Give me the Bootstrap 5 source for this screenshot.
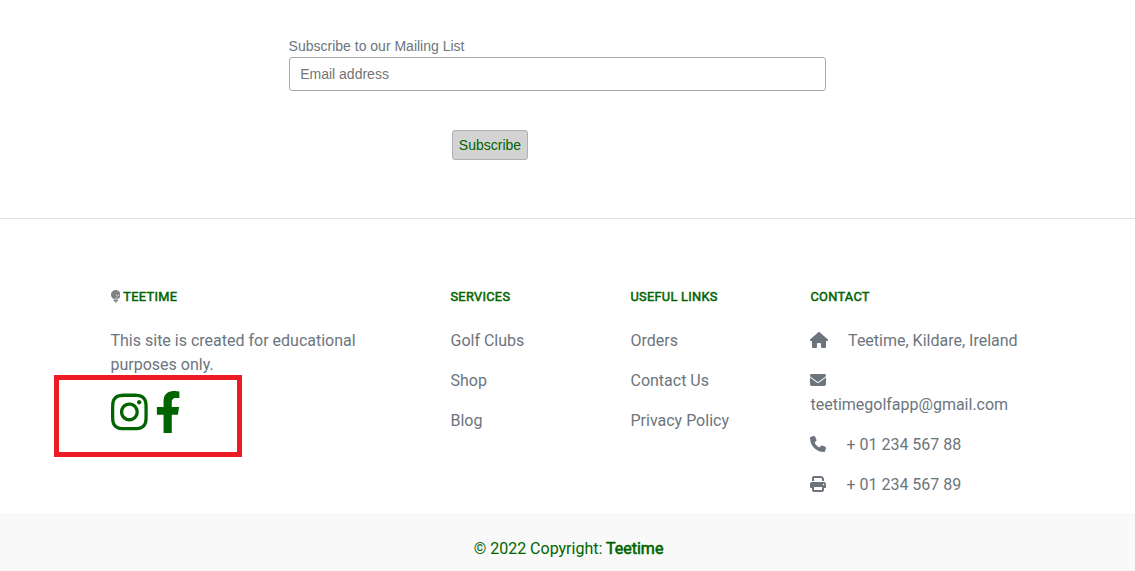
<!DOCTYPE html>
<html lang="en">
<head>
<meta charset="utf-8">
<meta name="viewport" content="width=device-width, initial-scale=1">
<title>Teetime</title>
<link href="https://cdn.jsdelivr.net/npm/bootstrap@5.3.0/dist/css/bootstrap.min.css" rel="stylesheet">
<style>
body{font-family:Roboto,sans-serif;color:#6c757d;overflow:hidden}
.mailing{font-family:"Liberation Sans",Arial,sans-serif;font-size:14px;width:537.4px;margin-left:288.6px;padding-top:36px;height:218px}
.mailing label{line-height:21px;display:block}
.mailing .form-control{height:34px;font-size:14px;padding:0 10.6px;border:1px solid #aaa;border-radius:3px}
.mailing .form-control::placeholder{color:#757575}
.btn-subscribe{--bs-btn-color:#006400;--bs-btn-bg:#d3d3d3;--bs-btn-border-color:#abb0b2;--bs-btn-hover-color:#006400;--bs-btn-hover-bg:#c4c4c4;font-size:14px;line-height:20px;width:76px;height:30px;padding:4px 0;border-radius:3px;margin:39px 0 0 163.4px}
.site-footer{border-top:1px solid #dee2e6}
.foot-links{padding:70.3px 11px 0 13px}
.foot-links h6{font-size:12.8px;line-height:15.4px;font-weight:400;letter-spacing:.29px;color:#006400;-webkit-text-stroke:.5px #006400;margin-bottom:24px;white-space:nowrap}
.foot-links p{margin-bottom:16px;line-height:24px}
.foot-links a{color:inherit;text-decoration:none}
svg{fill:currentColor}
.contact-icon{height:16px;vertical-align:-2px}
.tee{height:12.8px;width:9.6px;color:gray;vertical-align:-1.6px}
.social{color:#006400;height:42px;gap:8px;margin-top:14px}
.social svg{height:42px;display:block;overflow:visible}
.callout{left:-44.5px;top:85.7px;width:188px;height:82px;border:5px solid #ed1c24;pointer-events:none}
.copyright{background:#f9f9f9;color:#006400;height:60px;padding:24.5px 0 0 2px}
.brand{-webkit-text-stroke:.6px #006400;color:#006400;text-decoration:none}
</style>
</head>
<body>
<form class="mailing">
  <label for="email">Subscribe to our Mailing List</label>
  <input id="email" type="email" class="form-control" placeholder="Email address">
  <button type="button" class="btn btn-subscribe">Subscribe</button>
</form>
<footer class="site-footer">
  <div class="container foot-links">
    <div class="row">
      <div class="col-lg-4 mx-auto position-relative">
        <h6><svg class="tee" viewBox="0 0 384 512"><path d="M384 192c0 66.800-34.100 125.600-85.800 160H85.800C34.100 317.600 0 258.800 0 192C0 86 86 0 192 0S384 86 384 192zM242.100 256.600c0 18.500-15 33.500-33.500 33.500c-4.900 0-9.100 5.100-5.400 8.400c5.900 5.200 13.700 8.400 22.100 8.400c18.500 0 33.500-15 33.500-33.500c0-8.500-3.200-16.200-8.400-22.100c-3.300-3.700-8.400 .5-8.400 5.400zm-52.300-49.300c-4.900 0-9.100 5.100-5.400 8.400c5.900 5.200 13.700 8.400 22.100 8.400c18.500 0 33.500-15 33.500-33.500c0-8.500-3.200-16.200-8.400-22.100c-3.300-3.700-8.400 .5-8.400 5.400c0 18.500-15 33.500-33.500 33.500zm113.500-17.500c0 18.500-15 33.500-33.500 33.500c-4.900 0-9.100 5.100-5.400 8.400c5.900 5.200 13.700 8.400 22.100 8.400c18.500 0 33.500-15 33.500-33.500c0-8.500-3.200-16.200-8.400-22.100c-3.300-3.700-8.400 .5-8.400 5.400zM96 416c0-17.700 14.300-32 32-32h128c17.700 0 32 14.300 32 32s-14.300 32-32 32H240c-8.800 0-16 7.200-16 16v16c0 17.700-14.300 32-32 32s-32-14.300-32-32V464c0-8.800-7.200-16-16-16H128c-17.700 0-32-14.300-32-32z"/></svg> TEETIME</h6>
        <p class="mb-0">This site is created for educational purposes only.</p>
        <div class="social d-flex">
          <svg width="36.75" viewBox="0 0 448 512" aria-label="Instagram"><path d="M224.100 141c-63.600 0-114.900 51.300-114.900 114.900s51.300 114.900 114.900 114.900S339 319.500 339 255.900 287.700 141 224.100 141zm0 189.600c-41.100 0-74.700-33.500-74.700-74.700s33.500-74.700 74.700-74.700 74.700 33.500 74.700 74.700-33.600 74.700-74.700 74.700zm146.400-194.300c0 14.900-12 26.800-26.800 26.800-14.900 0-26.800-12-26.800-26.800s12-26.800 26.800-26.800 26.800 12 26.800 26.800zm76.100 27.200c-1.700-35.900-9.900-67.700-36.200-93.900-26.200-26.200-58-34.400-93.900-36.200-37-2.100-147.900-2.100-184.900 0-35.800 1.700-67.600 9.900-93.900 36.100s-34.400 58-36.200 93.900c-2.100 37-2.100 147.900 0 184.900 1.700 35.900 9.900 67.700 36.200 93.900s58 34.400 93.900 36.200c37 2.100 147.900 2.100 184.900 0 35.900-1.700 67.700-9.900 93.900-36.200 26.200-26.200 34.400-58 36.200-93.900 2.100-37 2.100-147.800 0-184.800zM398.800 388c-7.800 19.600-22.900 34.700-42.600 42.600-29.500 11.700-99.500 9-132.100 9s-102.700 2.600-132.100-9c-19.600-7.800-34.700-22.900-42.600-42.600-11.700-29.500-9-99.500-9-132.100s-2.600-102.700 9-132.100c7.800-19.600 22.900-34.700 42.600-42.600 29.500-11.700 99.500-9 132.100-9s102.700-2.600 132.100 9c19.600 7.800 34.700 22.900 42.600 42.600 11.700 29.500 9 99.500 9 132.100s2.700 102.700-9 132.100z"/></svg>
          <svg width="26.25" viewBox="0 0 320 512" aria-label="Facebook"><path d="M279.140 288l14.220-92.660h-88.910v-60.130c0-25.350 12.420-50.060 52.240-50.060h40.420V6.260S260.430 0 225.360 0c-73.220 0-121.080 44.380-121.080 124.720v70.620H22.890V288h81.390v224h100.170V288z"/></svg>
        </div>
        <div class="callout position-absolute"></div>
      </div>
      <div class="col-lg-2 mx-auto">
        <h6>SERVICES</h6>
        <p><a href="#">Golf Clubs</a></p>
        <p><a href="#">Shop</a></p>
        <p><a href="#">Blog</a></p>
      </div>
      <div class="col-lg-2 mx-auto">
        <h6>USEFUL LINKS</h6>
        <p><a href="#">Orders</a></p>
        <p><a href="#">Contact Us</a></p>
        <p><a href="#">Privacy Policy</a></p>
      </div>
      <div class="col-lg-3 mx-auto">
        <h6>CONTACT</h6>
        <p><svg class="contact-icon me-3" width="18" viewBox="0 0 576 512"><path d="M575.800 255.500c0 18-15 32.100-32 32.100h-32l.7 160.200c0 2.700-.2 5.400-.5 8.100V472c0 22.100-17.900 40-40 40H392c-22.100 0-40-17.900-40-40V384c0-17.700-14.300-32-32-32H256c-17.700 0-32 14.300-32 32v88c0 22.100-17.900 40-40 40H104c-22.100 0-40-17.900-40-40V287.600H32c-18 0-32-14-32-32.100c0-9 3-17 10-24L266.400 8c7-7 15-8 22-8s15 2 21 7L564.800 231.500c8 7 12 15 11 24z"/></svg> Teetime, Kildare, Ireland</p>
        <p><svg class="contact-icon me-3" width="16" viewBox="0 0 512 512"><path d="M48 64C21.500 64 0 85.500 0 112c0 15.100 7.100 29.300 19.200 38.400L236.800 313.600c11.400 8.500 27 8.500 38.400 0L492.800 150.400c12.100-9.100 19.200-23.300 19.200-38.400c0-26.500-21.500-48-48-48H48zM0 176V384c0 35.300 28.700 64 64 64H448c35.300 0 64-28.700 64-64V176L294.400 339.200c-22.800 17.100-54 17.100-76.800 0L0 176z"/></svg> teetimegolfapp@gmail.com</p>
        <p><svg class="contact-icon me-3" width="16" viewBox="0 0 512 512"><path d="M164.900 24.600c-7.700-18.600-28-28.500-47.400-23.200l-88 24C12.100 30.200 0 46 0 64C0 311.400 200.600 512 448 512c18 0 33.800-12.100 38.600-29.500l24-88c5.300-19.400-4.600-39.700-23.200-47.400l-96-40c-16.300-6.800-35.200-2.100-46.300 11.600L304.700 368C234.300 334.700 177.300 277.700 144 207.300L193.300 167c13.700-11.200 18.400-30 11.600-46.300l-40-96z"/></svg> + 01 234 567 88</p>
        <p><svg class="contact-icon me-3" width="16" viewBox="0 0 512 512"><path d="M128 0C92.700 0 64 28.700 64 64v96h64V64H354.700L384 93.300V160h64V93.300c0-17-6.700-33.300-18.700-45.300L400 18.700C388 6.700 371.700 0 354.700 0H128zM384 352v32 64H128V384 368 352H384zm64 32h32c17.700 0 32-14.300 32-32V256c0-35.300-28.700-64-64-64H64c-35.300 0-64 28.700-64 64v96c0 17.700 14.300 32 32 32H64v64c0 35.300 28.700 64 64 64H384c35.300 0 64-28.700 64-64V384zM432 248a24 24 0 1 1 0 48 24 24 0 1 1 0-48z"/></svg> + 01 234 567 89</p>
      </div>
    </div>
  </div>
  <div class="copyright text-center">© 2022 Copyright: <a class="brand" href="#">Teetime</a></div>
</footer>
<script src="https://cdn.jsdelivr.net/npm/bootstrap@5.3.0/dist/js/bootstrap.bundle.min.js"></script>
</body>
</html>
